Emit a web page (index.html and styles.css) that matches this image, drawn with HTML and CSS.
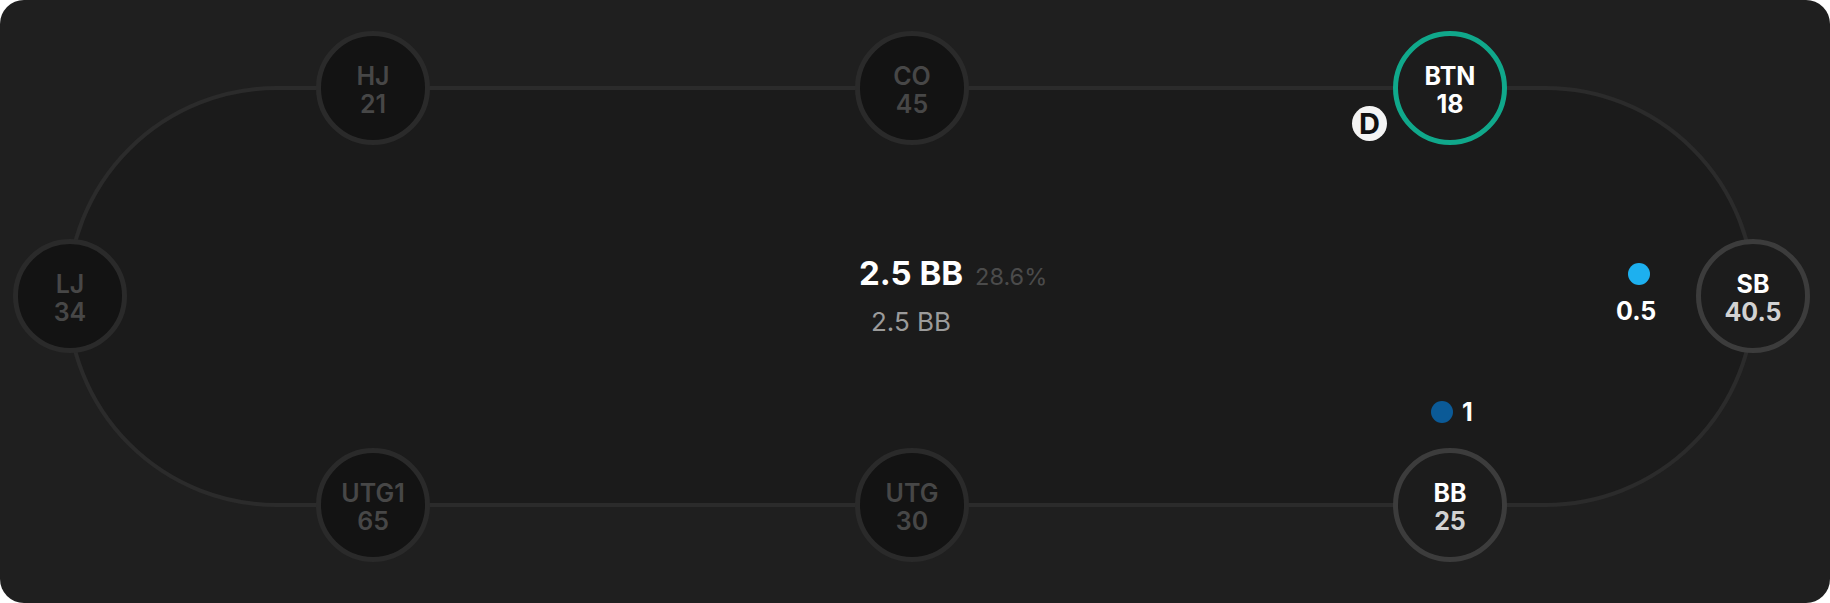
FILE: index.html
```html
<!DOCTYPE html>
<html lang="en">
<head>
  <meta charset="UTF-8">
  <meta name="viewport" content="width=device-width, initial-scale=1.0">
  <title>Table</title>
  <link rel="stylesheet" href="styles.css">
</head>
<body>
  <div class="card">
    <div class="table">
      <div class="pot">
        <span class="pot-value">2.5 BB</span>
        <span class="pot-pct">28.6%</span>
        <span class="pot-sub">2.5 BB</span>
      </div>

      <div class="seat seat-hj off"><span>HJ</span><span>21</span></div>
      <div class="seat seat-co off"><span>CO</span><span>45</span></div>
      <div class="seat seat-btn active"><span>BTN</span><span>18</span></div>
      <div class="seat seat-lj off"><span>LJ</span><span>34</span></div>
      <div class="seat seat-sb"><span>SB</span><span class="stack">40.5</span></div>
      <div class="seat seat-utg1 off"><span>UTG1</span><span>65</span></div>
      <div class="seat seat-utg off"><span>UTG</span><span>30</span></div>
      <div class="seat seat-bb"><span>BB</span><span class="stack">25</span></div>

      <div class="dealer">D</div>

      <div class="bet bet-sb">
        <span class="chip chip-light"></span>
        <span class="bet-amount">0.5</span>
      </div>
      <div class="bet bet-bb">
        <span class="chip chip-dark"></span>
        <span class="bet-amount">1</span>
      </div>
    </div>
  </div>
</body>
</html>
```

FILE: styles.css
```css
body{
  margin: 0;
  background-color: #ffffff;
  font-family: Inter, Roboto, sans-serif;
}
.card{
  width: 1830px;
  height: 603px;
  box-sizing: border-box;
  padding: 86px 74px 96px 66px;
  background-color: #1f1f1f;
  border-radius: 24px;
}
.table{
  position: relative;
  height: 100%;
  box-sizing: border-box;
  border: 4px solid #2b2b2b;
  border-radius: 211px;
  background-color: #1b1b1b;
  display: flex;
  align-items: center;
  justify-content: center;
}

/* pot in the middle of the felt */
.pot{
  display: grid;
  grid-template-columns: 1fr auto 1fr;
  align-items: baseline;
  row-gap: 14px;
  width: 400px;
  margin-top: -2px;
}
.pot-value{
  grid-column: 2;
  font-size: 33px;
  font-weight: 700;
  color: #ffffff;
  line-height: 38px;
}
.pot-pct{
  grid-column: 3;
  margin-left: 12px;
  font-size: 23.5px;
  color: #4b4b4b;
}
.pot-sub{
  grid-column: 2;
  justify-self: center;
  font-size: 26px;
  color: #9b9b9b;
  line-height: 32px;
}

.seat{
  position: absolute;
  width: 114px;
  height: 114px;
  box-sizing: border-box;
  transform: translate(-50%, -50%);
  padding-top: 4px;
  border: 5px solid #3c3c3c;
  border-radius: 50%;
  background-color: #1c1c1c;
  display: flex;
  flex-direction: column;
  align-items: center;
  justify-content: center;
  font-size: 25px;
  font-weight: 700;
  line-height: 28px;
  color: #ffffff;
}
.seat .stack{
  color: #d2d2d2;
}
.seat.off{
  background-color: #131313;
  border-color: #2a2a2a;
  color: #474747;
  font-weight: 600;
}
.seat.active{
  border-color: #10a88b;
}
.seat-hj{ left: 303px; top: -2px; }
.seat-co{ left: 842px; top: -2px; }
.seat-btn{ left: 1380px; top: -2px; }
.seat-lj{ left: 0; top: 206px; }
.seat-sb{ left: 1683px; top: 206px; }
.seat-utg1{ left: 303px; top: 415px; }
.seat-utg{ left: 842px; top: 415px; }
.seat-bb{ left: 1380px; top: 415px; }

.dealer{
  position: absolute;
  left: 1282px;
  top: 16px;
  width: 35px;
  height: 35px;
  border-radius: 50%;
  background-color: #f4f4f4;
  color: #111111;
  font-size: 29px;
  font-weight: 700;
  line-height: 35px;
  text-align: center;
}

.bet{
  position: absolute;
  display: flex;
  align-items: center;
  color: #ffffff;
  font-weight: 700;
}
.bet-amount{
  font-size: 25px;
  line-height: 28px;
}
.chip{
  width: 22px;
  height: 22px;
  border-radius: 50%;
}
.chip-light{
  background-color: #1db0ef;
}
.chip-dark{
  background-color: #0b5a97;
}
.bet-sb{
  left: 1546px;
  top: 173px;
  flex-direction: column;
  gap: 12px;
}
.bet-sb .chip{
  margin-left: 6px;
}
.bet-bb{
  left: 1361px;
  top: 308px;
  gap: 9px;
}
```
